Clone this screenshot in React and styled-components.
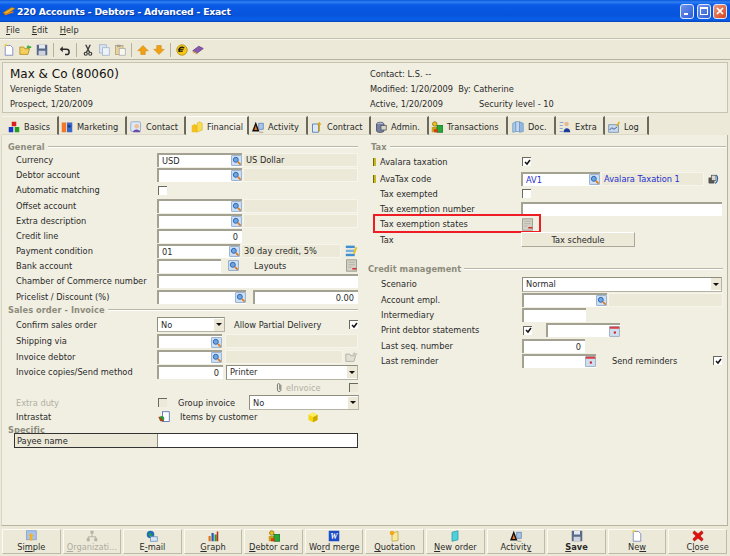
import React from "react";
import styled, { createGlobalStyle } from "styled-components";

const Global = createGlobalStyle`
  html, body { margin: 0; padding: 0; background: #ece9d8; }
  #root { width: 730px; height: 556px; overflow: hidden; }
  *, *::before, *::after { box-sizing: border-box; }
`;

const Win = styled.div`
  width: 730px; height: 556px; display: flex; flex-direction: column;
  background: #ece9d8; color: #2a2a2a;
  font-family: "DejaVu Sans", Verdana, sans-serif; font-size: 8.25px; overflow: hidden;
`;
const TitleBar = styled.div`
  height: 22px; flex: none; display: flex; align-items: center; padding: 0 3px 0 2px; gap: 1px;
  background: linear-gradient(180deg, #0a56d8 0%, #2f80f4 9%, #0a5ae6 22%, #0654dc 70%, #0a60ea 90%, #0644b8 100%);
`;
const TitleText = styled.span`
  flex: 1; color: #fff; font-size: 9.25px; font-weight: bold; letter-spacing: -0.2px;
  text-shadow: 1px 1px 0 #0a3aa0;
`;
const WinBtn = styled.div`
  width: 14px; height: 15px; border-radius: 3px; border: 1px solid #dfe8fb; display: flex; align-items: center; justify-content: center;
  margin-left: 1.5px;
  background: ${p => p.$close ? "linear-gradient(135deg,#ea9a80,#d6431c)" : "linear-gradient(135deg,#6f93ec,#2e5fd8)"};
`;
const MenuBar = styled.div`
  height: 17px; flex: none; display: flex; align-items: center; gap: 12px; padding-left: 6px;
  border-bottom: 1px solid #c4c1ae;
`;
const ToolBar = styled.div`
  height: 21px; flex: none; display: flex; align-items: center; padding-left: 3px; gap: 4px;
  border-bottom: 1px solid #b5b2a0; border-top: 1px solid #f7f6ee;
`;
const ToolSep = styled.div`
  width: 1px; height: 14px; background: #b5b2a0; margin: 0 1px;
`;
const Header = styled.div`
  flex: none; height: 51px; margin: 2px 2px 3px 2px; padding: 3px 0 0 7px; display: flex;
  background: #f1efe2; border: 1px solid #c6c3b0;
`;
const HeadLeft = styled.div` width: 360px; `;
const HeadRight = styled.div` flex: 1; `;
const HeadLine = styled.div`
  height: 15px; display: flex; align-items: center; white-space: pre;
`;
const HeadTitle = styled(HeadLine)` font-size: 12px; color: #111; `;
const HeadCell = styled.span` width: 109px; `;
const TabBar = styled.div`
  height: 19px; flex: none; display: flex; padding-left: 2px;
`;
const Tab = styled.div`
  width: ${p => p.$w}px; flex: none; display: flex; align-items: center; gap: 4px; padding: 2px 0 0 ${p => p.$pad}px;
  background: ${p => p.$active ? "#f1efe2" : "#ece9d8"};
  border-right: 2px solid #6a695c; border-top: 1px solid ${p => p.$active ? "#fff" : "#f6f4ea"};
  border-bottom: 1px solid ${p => p.$active ? "#f1efe2" : "#dcd9c8"};
`;
const Panel = styled.div`
  height: 391px; flex: none; margin: 0 2px 0 1px; padding: 6px 0 0 6px; display: flex; gap: 10px;
  background: #f1efe2; border-right: 1px solid #b6b3a0; border-bottom: 1px solid #b6b3a0; border-left: 1px solid #d8d5c4;
`;
const Col = styled.div`
  width: ${p => p.$w}px; flex: none; display: flex; flex-direction: column;
`;
const Section = styled.div`
  height: ${p => p.$h || 11}px; flex: none; display: flex; align-items: center; gap: 3px;
  margin-top: ${p => p.$mt || 0}px; padding-left: ${p => p.$pl || 0}px; padding-right: ${p => p.$pr || 0}px;
  color: #8d8c7c; font-weight: bold; letter-spacing: 0.05px;
  &::after { content: ""; flex: 1; height: 2px; border-top: 1px solid #b9b7a6; border-bottom: 1px solid #fff;
    visibility: ${p => p.$bare ? "hidden" : "visible"}; }
`;
const Row = styled.div`
  position: relative; height: ${p => p.$h || 15}px; flex: none; display: flex; align-items: center;
  padding-left: ${p => p.$pad ?? 8}px;
`;
const Highlight = styled(Row)`
  &::after {
    content: ""; position: absolute; left: 5px; top: -2px; width: 168px; height: 19px;
    border: 2px solid #ee1c25; pointer-events: none;
  }
`;
const Label = styled.span`
  width: 141px; flex: none; white-space: nowrap;
  color: ${p => p.$muted ? "#b0afa2" : "inherit"};
  ${p => p.$mark ? `&::before { content: ""; display: inline-block; width: 3px; height: 8px; margin-left: -7px; margin-right: 4px; background: #c8b820; border-left: 1px solid #6f6a10; vertical-align: -1px; }` : ""}
`;
const Text = styled.span`
  margin-left: ${p => p.$ml || 0}px; white-space: nowrap; color: ${p => p.$muted ? "#b0afa2" : "inherit"};
`;
const Input = styled.div`
  width: ${p => p.$w}px; height: 14px; flex: none; display: flex; align-items: center;
  justify-content: ${p => p.$right ? "flex-end" : "space-between"};
  margin-left: ${p => p.$ml || 0}px; padding-left: 3px; padding-right: ${p => p.$right ? 4 : 0}px;
  background: #fff; border-top: 2px solid #a3a192; border-left: 2px solid #a3a192;
  color: ${p => p.$blue ? "#1f2fd0" : "inherit"};
`;
const Desc = styled.div`
  width: ${p => p.$w}px; height: 14px; flex: none; display: flex; align-items: center; padding-left: 2px;
  margin-left: ${p => p.$ml ?? 1}px; background: #ece9d8; border: 1px solid #f6f5ec;
  color: ${p => p.$blue ? "#1f2fd0" : "inherit"};
`;
const SelectBox = styled(Input)`
  height: 15px; border-width: 1px; border-style: solid; border-color: #8f8d7e #b5b3a3 #b5b3a3 #8f8d7e; padding-right: 0;
`;
const Arrow = styled.div`
  width: 11px; height: 12px; flex: none; display: flex; align-items: center; justify-content: center;
  background: #ece9d8; border-left: 1px solid #fff;
  &::after { content: ""; border: 3px solid transparent; border-top: 3px solid #111; border-bottom: 0; }
`;
const Check = styled.div`
  width: 9px; height: 9px; flex: none; margin-left: ${p => p.$ml ?? 1}px; background: ${p => p.$off ? "#ece9d8" : "#fff"};
  border-top: 1px solid #6a695e; border-left: 1px solid #6a695e; display: flex; align-items: center; justify-content: center;
`;
const Push = styled.div` margin-left: auto; display: flex; align-items: center; `;
const Slot = styled.div`
  display: flex; flex: none; margin-left: ${p => p.$ml || 0}px;
`;
const LongBtn = styled.div`
  width: ${p => p.$w}px; height: 15px; flex: none; display: flex; align-items: center; justify-content: center;
  background: #ece9d8; border: 1px solid; border-color: #fff #aca899 #aca899 #fff;
`;
const PayeeRow = styled.div`
  display: flex; height: 15px; flex: none; margin: -2px 0 0 6px; border: 1px solid #333; align-items: stretch;
`;
const PayeeLabel = styled.div`
  width: 143px; display: flex; align-items: center; padding-left: 2px; border-right: 1px solid #8f8d7e; background: #ece9d8;
`;
const PayeeField = styled.div` flex: 1; background: #fff; `;
const BottomBar = styled.div`
  flex: 1; display: grid; grid-template-columns: repeat(12, 1fr); gap: 2px; padding: 3px 3px 2px 2px;
`;
const BottomBtn = styled.div`
  display: flex; flex-direction: column; align-items: center; justify-content: flex-start;
  background: #ece9d8; border: 1px solid; border-color: #fbfaf3 #bdbaa7 #bdbaa7 #fbfaf3; white-space: nowrap;
  height: 25px; line-height: 10px;
  color: ${p => p.$off ? "#aeada0" : "inherit"}; font-weight: ${p => p.$bold ? "bold" : "normal"};
`;

const S = ({ s = 12, v = 16, children }) => <svg width={s} height={s} viewBox={`0 0 ${v} ${v}`} style={{ flex: "none", display: "block" }}>{children}</svg>;

const Search = () => <S s={11}><rect x="1" y="1" width="14" height="14" fill="#cfe0f4" stroke="#6f93bd" /><circle cx="7" cy="7" r="3.6" fill="#6ea6e0" stroke="#2a62b0" strokeWidth="1.4" /><path d="M10 10l4 4" stroke="#e07818" strokeWidth="2.4" /></S>;
const Calendar = () => <S s={11}><rect x="1" y="1" width="14" height="14" fill="#cfdff0" stroke="#7d93ae" /><rect x="1" y="1" width="14" height="3" fill="#d94040" /><rect x="7" y="8" width="3" height="3" fill="#d01818" /></S>;
const Tick = () => <svg width="7" height="7" viewBox="0 0 7 7"><path d="M1 3l2 2 3-4" fill="none" stroke="#111" strokeWidth="1.5" /></svg>;
const PageList = () => <S s={13}><rect x="1" y="2" width="11" height="3" fill="#3f8fd0" /><rect x="1" y="7" width="11" height="3" fill="#7ab0dd" /><rect x="1" y="12" width="11" height="3" fill="#3f8fd0" /><path d="M11 12l3-8" stroke="#e8c020" strokeWidth="2.4" /></S>;
const Sheet = () => <S s={13}><rect x="2" y="1" width="12" height="14" fill="#d4d2c6" stroke="#8f8f86" /><path d="M4 4h8M4 7h8M4 10h4" stroke="#aeaca2" /><path d="M9 12h5" stroke="#d03030" strokeWidth="2" /></S>;
const Folder = ({ muted }) => <S s={13}><path d="M1 14V5h5l1 2h6l-2 7z" fill={muted ? "#e2e0d4" : "#f2cf5e"} stroke={muted ? "#a9a89c" : "#b48a20"} /><path d="M9 5l3-3v2h3v2h-3v2z" fill={muted ? "#c8c7ba" : "#3fae3f"} /></S>;
const Clip = () => <S s={11}><path d="M10 4v8a2.6 2.6 0 01-5 0V4a1.7 1.7 0 013.4 0v7" fill="none" stroke="#77766c" strokeWidth="1.4" /></S>;
const Box3d = () => <S s={12}><path d="M2 5l6-3 6 3v7l-6 3-6-3z" fill="#f4d80c" /><path d="M8 8v7l6-3V5z" fill="#d0a800" /><path d="M2 5l6 3 6-3-6-3z" fill="#fbee60" /></S>;
const Globe = () => <S s={12}><rect x="6" y="1" width="9" height="13" fill="#fff" stroke="#3a5fb0" /><circle cx="5" cy="10" r="3.4" fill="#2c9a3a" /><path d="M1 8l4 4M3 13h5" stroke="#c83018" strokeWidth="1.6" /></S>;
const Phone = () => <S s={12}><rect x="2" y="6" width="8" height="8" rx="1" fill="#55554f" /><rect x="6" y="3" width="6" height="7" fill="#d8d8d0" stroke="#55554f" /><path d="M12 3c3 1 3 9-1 11" fill="none" stroke="#2a62b0" strokeWidth="1.5" /></S>;

const Doc = () => <S><path d="M3 2h7l3 3v10H3z" fill="#fff" stroke="#6878b8" /><path d="M2 1l1 3 3-3-3-1z" fill="#f4c820" /></S>;
const Disk = () => <S><rect x="1" y="1" width="14" height="14" fill="#586a8c" /><rect x="4" y="1" width="8" height="5" fill="#e4e8ee" /><rect x="3.5" y="9" width="9" height="6" fill="#cfd4dc" /></S>;
const Undo = () => <S><path d="M4 7h6a3.2 3.2 0 010 7H8" fill="none" stroke="#2a2a2a" strokeWidth="2" /><path d="M5 3v8L1 7z" fill="#2a2a2a" /></S>;
const Cut = () => <S><path d="M5 1l5 10M11 1L6 11" stroke="#3a3a3a" strokeWidth="1.8" /><circle cx="5" cy="13" r="2" fill="none" stroke="#3a3a3a" strokeWidth="1.6" /><circle cx="11" cy="13" r="2" fill="none" stroke="#3a3a3a" strokeWidth="1.6" /></S>;
const Copy = () => <S><rect x="2" y="1" width="9" height="11" fill="#d8e4f2" stroke="#9cb0cc" /><rect x="6" y="5" width="9" height="10" fill="#eef3fa" stroke="#9cb0cc" /></S>;
const Paste = () => <S><rect x="2" y="2" width="10" height="12" fill="#e6d39a" stroke="#b0a070" /><rect x="7" y="6" width="8" height="9" fill="#f8f8f2" stroke="#aaa" /><rect x="4" y="1" width="5" height="3" fill="#a0a0a0" /></S>;
const Up = () => <S><path d="M8 2l7 7h-4v5H5V9H1z" fill="#f0a010" stroke="#c87808" strokeWidth=".6" /></S>;
const Down = () => <S><path d="M8 14l7-7h-4V2H5v5H1z" fill="#f0a010" stroke="#c87808" strokeWidth=".6" /></S>;
const Coin = () => <S><circle cx="8" cy="8" r="7" fill="#f4c818" stroke="#b08a10" /><path d="M11 5.5A3.6 3.6 0 105 10.5M3 7h7M3 9.5h6" fill="none" stroke="#111" strokeWidth="1.5" /></S>;
const Book = () => <S><path d="M1 9l8-6 6 3-8 6z" fill="#8a5cb0" stroke="#5c3a80" /><path d="M1 9l6 3v2l-6-3z" fill="#c8a050" /></S>;

const Cubes = () => <S><rect x="5" y="1" width="6" height="6" fill="#d82020" /><rect x="1" y="8" width="6" height="7" fill="#1838c8" /><rect x="9" y="8" width="6" height="7" fill="#20a020" /></S>;
const Market = () => <S><rect x="1" y="2" width="6" height="13" fill="#f07828" /><rect x="8" y="2" width="7" height="13" fill="#3a68c8" /><circle cx="11" cy="7" r="2" fill="#1c3c8c" /></S>;
const Person = () => <S><rect x="1" y="1" width="13" height="13" rx="2" fill="#dce8f6" stroke="#7f9ccc" /><circle cx="9" cy="7" r="3" fill="#f0c090" /><path d="M4 15c0-5 9-5 10 0z" fill="#6c4aa8" /></S>;
const Boxes = () => <S><path d="M1 6l4-2 3 2v9H1z" fill="#f4c020" /><path d="M8 3l3-2 4 2v9l-7 3z" fill="#f8dc50" stroke="#c89808" strokeWidth=".5" /></S>;
const Act = () => <S><path d="M5 1l5 13H0z" fill="#111" /><path d="M5 6l2 6H3z" fill="#f07818" /><rect x="9" y="3" width="6" height="8" fill="#a8c4e6" stroke="#5b82b8" /><path d="M10 15h5" stroke="#888" /></S>;
const Contract = () => <S><path d="M2 4h8v11H2z" fill="#dbe8f8" stroke="#4068b0" /><path d="M11 1l3 4h-2v9h-2V5H8z" fill="#d8a818" /></S>;
const Admin = () => <S><ellipse cx="7" cy="4" rx="5" ry="2.4" fill="#a8b4d8" stroke="#555" /><path d="M2 4v9c0 3 10 3 10 0V4" fill="#7480a8" stroke="#444" /><rect x="8" y="6" width="7" height="6" fill="#d6d6cc" stroke="#555" /></S>;
const Trans = () => <S><circle cx="5" cy="4" r="3" fill="#e8c020" stroke="#907010" /><rect x="1" y="8" width="7" height="7" fill="#c8a018" /><rect x="8" y="6" width="8" height="9" fill="#28a838" stroke="#147020" /><rect x="4" y="11" width="5" height="4" fill="#d83818" /></S>;
const Books = () => <S><path d="M1 3l4-2v13l-4 1z" fill="#a8c8e8" stroke="#7098c0" /><path d="M5 1h5v13H5z" fill="#c0d8f0" stroke="#7098c0" /><path d="M10 1l5 2v11l-5 1z" fill="#90b8e0" stroke="#7098c0" /></S>;
const Extra = () => <S><path d="M1 2h5M1 6h4M1 10h4M1 14h4" stroke="#88a8d0" strokeWidth="1.6" /><circle cx="10" cy="4" r="3" fill="#e8b890" /><path d="M6 15c0-7 9-7 9 0z" fill="#1c3c98" /></S>;
const LogI = () => <S><rect x="1" y="5" width="13" height="10" fill="#c8d8ec" stroke="#6a84a8" /><path d="M2 12l3-3 3 2 4-3" fill="none" stroke="#203c80" /><path d="M12 7l3-6" stroke="#e0b010" strokeWidth="2" /></S>;

const Simple = () => <S><rect x="2" y="1" width="13" height="12" fill="#a8c4ec" stroke="#7f9cc8" /><path d="M8 4l4 4h-2v6H6V8H4z" fill="#f4b030" /></S>;
const Org = () => <S><path d="M8 5v4M3 12V9h10v3" fill="none" stroke="#a5a498" /><rect x="6" y="1" width="4" height="4" fill="#b3b2a6" /><rect x="1" y="11" width="4" height="4" fill="#b3b2a6" /><rect x="11" y="11" width="4" height="4" fill="#b3b2a6" /></S>;
const Mail = () => <S><circle cx="6" cy="6" r="5" fill="#1c6fb8" /><path d="M3 4l4 1 1 3-3 1z" fill="#2c9c3c" /><rect x="6" y="9" width="9" height="6" fill="#d6e4f4" stroke="#6a8cb8" /></S>;
const Bars = () => <S><rect x="2" y="8" width="3" height="7" fill="#e07818" /><rect x="6" y="4" width="3" height="11" fill="#2858c0" /><rect x="10" y="6" width="3" height="9" fill="#28a038" /><rect x="13" y="2" width="2" height="13" fill="#c82818" /></S>;
const Word = () => <S><rect x="1" y="1" width="14" height="14" fill="#1c4cc8" /><text x="8" y="12" textAnchor="middle" fill="#fff" fontSize="11" fontStyle="italic" fontWeight="bold" fontFamily="Liberation Serif, serif">W</text></S>;
const Quote = () => <S><path d="M4 4l8-2v12l-8 1z" fill="#f8e8a0" stroke="#b8a040" /><circle cx="4" cy="4" r="3" fill="#f0a818" /></S>;
const NewOrder = () => <S><path d="M4 3l8-2v12l-8 2z" fill="#50d0d8" stroke="#2898a8" /></S>;
const Cross = () => <S><path d="M3 1l5 4 5-4 2 3-4 4 4 4-2 3-5-4-5 4-2-3 4-4-4-4z" fill="#e01010" stroke="#8c0808" strokeWidth=".5" /></S>;

const TABS = [
  ["Basics", Cubes, 57, 6], ["Marketing", Market, 68, 2], ["Contact", Person, 59, 3], ["Financial", Boxes, 63, 5, true], ["Activity", Act, 59, 3],
  ["Contract", Contract, 63, 3], ["Admin.", Admin, 58, 4], ["Transactions", Trans, 79, 2], ["Doc.", Books, 48, 4], ["Extra", Extra, 49, 3], ["Log", LogI, 44, 3],
];
const BUTTONS = [
  [Simple, <>Si<u>m</u>ple</>], [Org, <><u>O</u>rganizati...</>, true], [Mail, <>E<u>-</u>mail</>], [Bars, <><u>G</u>raph</>],
  [Trans, <><u>D</u>ebtor card</>], [Word, <>Wo<u>r</u>d merge</>], [Quote, <><u>Q</u>uotation</>], [NewOrder, <><u>N</u>ew order</>],
  [Act, <>Activit<u>y</u></>], [Disk, <><u>S</u>ave</>, false, true], [Doc, <>Ne<u>w</u></>], [Cross, <>C<u>l</u>ose</>],
];

const Sel = ({ w, ml, children }) => <SelectBox $w={w} $ml={ml}>{children}<Arrow /></SelectBox>;

export default function App() {
  return (
    <Win>
      <Global />
      <TitleBar>
        <S s={14}><path d="M1 10l10-6 4 1-10 7z" fill="#f0b020" stroke="#a86808" strokeWidth=".7" /><path d="M3 12l10-3" stroke="#e88010" strokeWidth="1.5" /></S>
        <TitleText>220 Accounts - Debtors - Advanced - Exact</TitleText>
        <WinBtn><svg width="8" height="8"><rect x="1" y="6" width="4" height="2" fill="#fff" /></svg></WinBtn>
        <WinBtn><svg width="8" height="8"><rect x=".5" y=".5" width="7" height="7" fill="none" stroke="#fff" /><rect x="0" y="0" width="8" height="2" fill="#fff" /></svg></WinBtn>
        <WinBtn $close><svg width="8" height="8"><path d="M1 1l6 6M7 1l-6 6" stroke="#fff" strokeWidth="1.7" /></svg></WinBtn>
      </TitleBar>
      <MenuBar><span><u>F</u>ile</span><span><u>E</u>dit</span><span><u>H</u>elp</span></MenuBar>
      <ToolBar>
        <Doc /><Folder /><Disk /><ToolSep /><Undo /><ToolSep /><Cut /><Copy /><Paste /><ToolSep /><Up /><Down /><ToolSep /><Coin /><Book />
      </ToolBar>
      <Header>
        <HeadLeft>
          <HeadTitle>Max &amp; Co (80060)</HeadTitle>
          <HeadLine>Verenigde Staten</HeadLine>
          <HeadLine>Prospect, 1/20/2009</HeadLine>
        </HeadLeft>
        <HeadRight>
          <HeadLine>Contact: L.S. --</HeadLine>
          <HeadLine>Modified: 1/20/2009  By: Catherine</HeadLine>
          <HeadLine><HeadCell>Active, 1/20/2009</HeadCell>Security level - 10</HeadLine>
        </HeadRight>
      </Header>
      <TabBar>
        {TABS.map(([t, I, w, pad, a]) => <Tab key={t} $w={w} $pad={pad} $active={a}><I />{t}</Tab>)}
      </TabBar>
      <Panel>
        <Col $w={350}>
          <Section>General</Section>
          <Row><Label>Currency</Label><Input $w={85}>USD<Search /></Input><Desc $w={115}>US Dollar</Desc></Row>
          <Row><Label>Debtor account</Label><Input $w={85}><span /><Search /></Input><Desc $w={115} /></Row>
          <Row $h={16}><Label>Automatic matching</Label><Check /></Row>
          <Row><Label>Offset account</Label><Input $w={85}><span /><Search /></Input><Desc $w={115} /></Row>
          <Row><Label>Extra description</Label><Input $w={85}><span /><Search /></Input><Desc $w={115} /></Row>
          <Row><Label>Credit line</Label><Input $w={85} $right>0</Input></Row>
          <Row><Label>Payment condition</Label><Input $w={83}>01<Search /></Input><Desc $w={100}>30 day credit, 5%</Desc><Push><PageList /></Push></Row>
          <Row><Label>Bank account</Label><Input $w={64} /><Slot $ml={7}><Search /></Slot><Text $ml={15}>Layouts</Text><Push><Sheet /></Push></Row>
          <Row $h={16}><Label>Chamber of Commerce number</Label><Input $w={201} /></Row>
          <Row><Label>Pricelist / Discount (%)</Label><Input $w={89}><span /><Search /></Input><Input $w={105} $ml={7} $right>0.00</Input></Row>
          <Section $h={12}>Sales order - Invoice</Section>
          <Row $h={17}><Label>Confirm sales order</Label><Sel w={68}>No</Sel><Text $ml={9}>Allow Partial Delivery</Text><Push><Check><Tick /></Check></Push></Row>
          <Row $h={16}><Label>Shipping via</Label><Input $w={65}><span /><Search /></Input><Desc $w={133} $ml={3} /></Row>
          <Row><Label>Invoice debtor</Label><Input $w={65}><span /><Search /></Input><Desc $w={118} $ml={3} /><Push><Folder muted /></Push></Row>
          <Row $h={16}><Label>Invoice copies/Send method</Label><Input $w={66} $right>0</Input><Sel w={132} ml={3}>Printer</Sel></Row>
          <Row><Slot $ml={258}><Clip /></Slot><Text $ml={1} $muted>eInvoice</Text><Push><Check $off /></Push></Row>
          <Row><Label $muted>Extra duty</Label><Check $off /><Text $ml={11}>Group invoice</Text><Sel w={110} ml={14}>No</Sel></Row>
          <Row $h={14}><Label>Intrastat</Label><Slot $ml={1}><Globe /></Slot><Text $ml={10}>Items by customer</Text><Slot $ml={50}><Box3d /></Slot></Row>
          <Section $h={11} $bare>Specific</Section>
          <PayeeRow><PayeeLabel>Payee name</PayeeLabel><PayeeField /></PayeeRow>
        </Col>
        <Col $w={358}>
          <Section $pl={3}>Tax</Section>
          <Row $h={19} $pad={12}><Label $mark>Avalara taxation</Label><Check><Tick /></Check></Row>
          <Row $pad={12}><Label $mark>AvaTax code</Label><Input $w={79} $blue>AV1<Search /></Input><Desc $w={103} $blue>Avalara Taxation 1</Desc><Slot $ml={3}><Phone /></Slot></Row>
          <Row $pad={12}><Label>Tax exempted</Label><Check /></Row>
          <Row $pad={12}><Label>Tax exemption number</Label><Input $w={201} /></Row>
          <Highlight $h={16} $pad={12}><Label>Tax exemption states</Label><Slot><Sheet /></Slot></Highlight>
          <Row $pad={12}><Label>Tax</Label><LongBtn $w={114}>Tax schedule</LongBtn></Row>
          <Section $h={14} $mt={15} $pr={3}>Credit management</Section>
          <Row $h={16} $pad={13}><Label>Scenario</Label><Sel w={200}>Normal</Sel></Row>
          <Row $pad={13}><Label>Account empl.</Label><Input $w={85}><span /><Search /></Input><Desc $w={115} /></Row>
          <Row $pad={13}><Label>Intermediary</Label><Input $w={64} /></Row>
          <Row $h={16} $pad={13}><Label>Print debtor statements</Label><Check><Tick /></Check><Input $w={74} $ml={14}><span /><Calendar /></Input></Row>
          <Row $pad={13}><Label>Last seq. number</Label><Input $w={63} $right>0</Input></Row>
          <Row $pad={13}><Label>Last reminder</Label><Input $w={74}><span /><Calendar /></Input><Text $ml={16}>Send reminders</Text><Check $ml={36}><Tick /></Check></Row>
        </Col>
      </Panel>
      <BottomBar>
        {BUTTONS.map(([I, t, off, bold], i) => <BottomBtn key={i} $off={off} $bold={bold}><I /><span>{t}</span></BottomBtn>)}
      </BottomBar>
    </Win>
  );
}
